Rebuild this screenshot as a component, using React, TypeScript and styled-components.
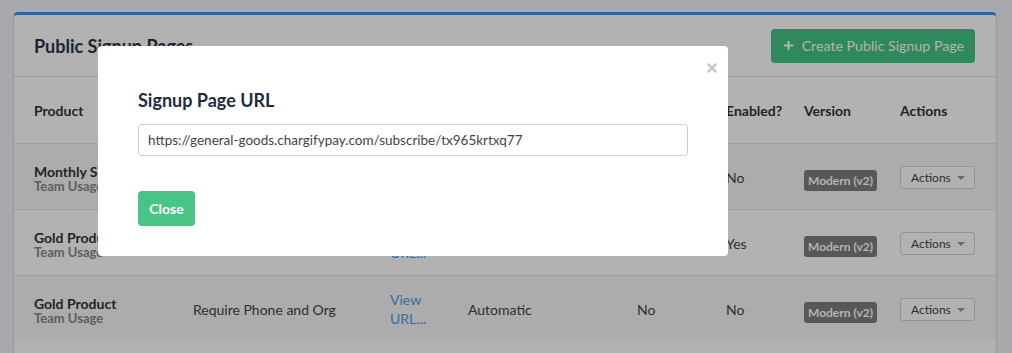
import React from "react";
import styled, { createGlobalStyle } from "styled-components";
import { FaPlus, FaTimes } from "react-icons/fa";

const GlobalStyle = createGlobalStyle`
  html, body { margin: 0; padding: 0; }
  body {
    background: #f2f3f8;
    font-family: Lato, "Open Sans", "Liberation Sans", sans-serif;
    color: #444;
    -webkit-font-smoothing: antialiased;
  }
  * { box-sizing: border-box; }
`;

const Page = styled.div`
  padding: 12px 15px 0 13px;
  height: 353px;
  overflow: hidden;
`;

const Panel = styled.div`
  background: #fff;
  border: 1px solid #dcdcdc;
  border-top: 3px solid #4491e0;
  border-radius: 5px;
`;

const PanelHeader = styled.div`
  display: flex;
  align-items: center;
  justify-content: space-between;
  height: 62px;
  padding: 0 21px 0 20px;
  border-bottom: 1px solid #dedede;
`;

const Title = styled.h2`
  margin: 0;
  font-size: 18px;
  font-weight: 700;
  color: #27364a;
`;

const PrimaryButton = styled.button`
  display: flex;
  align-items: center;
  gap: 8px;
  height: 34px;
  padding: 0 11px 0 12px;
  border: none;
  border-radius: 4px;
  background: #44c584;
  color: #fff;
  font-family: inherit;
  font-size: 14.2px;
  cursor: pointer;
`;

const Table = styled.div`
  display: grid;
  grid-template-columns: 171px 197px 78px 169px 89px 78px 96px 104px;
  padding-bottom: 40px;
`;

const Row = styled.div<{ $striped?: boolean; $head?: boolean }>`
  display: contents;
  & > div {
    background: ${(p) => (p.$striped ? "#f6f6f6" : "#fff")};
    border-top: ${(p) => (p.$head ? "none" : "1px solid #e6e6e6")};
    height: ${(p) => (p.$head ? "66px" : "66px")};
    font-weight: ${(p) => (p.$head ? 700 : 400)};
    color: ${(p) => (p.$head ? "#333" : "#444")};
  }
`;

const Cell = styled.div<{ $first?: boolean }>`
  display: flex;
  flex-direction: column;
  justify-content: center;
  align-items: flex-start;
  padding: 1px 8px 0 ${(p) => (p.$first ? "20px" : "8px")};
  font-size: 14px;
  line-height: 19px;
`;

const ProductCell = styled(Cell)`
  padding-top: 4px;
`;

const ProductName = styled.div`
  font-weight: 700;
  color: #333;
  font-size: 14px;
  line-height: 15px;
`;

const ProductSub = styled.div`
  font-weight: 700;
  color: #888;
  font-size: 13px;
  line-height: 15px;
`;

const Link = styled.a`
  color: #4c9cf0;
  text-decoration: none;
  line-height: 19px;
`;

const Badge = styled.span`
  display: inline-block;
  background: #7e7e7e;
  color: #fff;
  font-size: 12px;
  font-weight: 700;
  line-height: 21px;
  padding: 0 4px;
  border-radius: 3px;
  margin-top: 6px;
`;

const ActionsButton = styled.button`
  display: flex;
  align-items: center;
  gap: 6px;
  height: 23px;
  width: 75px;
  padding: 0 8px 0 10px;
  border: 1px solid #d4d4d4;
  border-radius: 3px;
  background: #fff;
  color: #444;
  font-family: inherit;
  font-size: 12px;
`;

const Caret = styled.span`
  width: 0;
  height: 0;
  border-left: 4px solid transparent;
  border-right: 4px solid transparent;
  border-top: 4px solid #999;
  margin-top: 1px;
`;

const Backdrop = styled.div`
  position: fixed;
  inset: 0;
  background: rgba(0, 0, 0, 0.3);
`;

const Modal = styled.div`
  position: absolute;
  top: 46px;
  left: 98px;
  width: 630px;
  height: 210px;
  background: #fff;
  border-radius: 4px;
  padding: 43px 40px 30px 40px;
  display: flex;
  flex-direction: column;
`;

const CloseX = styled.button`
  position: absolute;
  top: 15px;
  right: 9px;
  border: none;
  background: none;
  padding: 0;
  color: #c6c6c6;
  display: flex;
`;

const ModalTitle = styled.h3`
  margin: 0 0 13px 0;
  font-size: 18px;
  font-weight: 700;
  color: #1f2d3d;
  line-height: 22px;
`;

const UrlInput = styled.input`
  width: 550px;
  height: 32px;
  border: 1px solid #cfcfcf;
  border-radius: 3px;
  padding: 0 9px;
  font-family: inherit;
  font-size: 13.5px;
  color: #444;
  outline: none;
`;

const CloseButton = styled.button`
  margin-top: 35px;
  align-self: flex-start;
  height: 35px;
  width: 57px;
  border: none;
  border-radius: 4px;
  background: #47c486;
  color: #fff;
  font-family: inherit;
  font-size: 14px;
  font-weight: 700;
`;

type Item = {
  name: string;
  sub: string;
  req: string;
  ret: string;
  a: string;
  enabled: string;
};

const rows: Item[] = [
  { name: "Monthly Subscription", sub: "Team Usage", req: "Require Phone", ret: "Automatic", a: "No", enabled: "No" },
  { name: "Gold Product", sub: "Team Usage", req: "None", ret: "Automatic", a: "No", enabled: "Yes" },
  { name: "Gold Product", sub: "Team Usage", req: "Require Phone and Org", ret: "Automatic", a: "No", enabled: "No" },
];

export default function App() {
  return (
    <>
      <GlobalStyle />
      <Page>
        <Panel>
          <PanelHeader>
            <Title>Public Signup Pages</Title>
            <PrimaryButton>
              <FaPlus size={11} />
              Create Public Signup Page
            </PrimaryButton>
          </PanelHeader>
          <Table>
            <Row $head>
              <Cell $first>Product</Cell>
              <Cell>Requirements</Cell>
              <Cell>URL</Cell>
              <Cell>Return Method</Cell>
              <Cell>Default?</Cell>
              <Cell>Enabled?</Cell>
              <Cell>Version</Cell>
              <Cell>Actions</Cell>
            </Row>
            {rows.map((r, i) => (
              <Row key={i} $striped={i % 2 === 0}>
                <ProductCell $first>
                  <ProductName>{r.name}</ProductName>
                  <ProductSub>{r.sub}</ProductSub>
                </ProductCell>
                <Cell>{r.req}</Cell>
                <Cell>
                  <Link href="#">View URL...</Link>
                </Cell>
                <Cell>{r.ret}</Cell>
                <Cell>{r.a}</Cell>
                <Cell>{r.enabled}</Cell>
                <Cell>
                  <Badge>Modern (v2)</Badge>
                </Cell>
                <Cell>
                  <ActionsButton>
                    Actions
                    <Caret />
                  </ActionsButton>
                </Cell>
              </Row>
            ))}
          </Table>
        </Panel>
      </Page>
      <Backdrop>
        <Modal>
          <CloseX aria-label="close">
            <FaTimes size={14} />
          </CloseX>
          <ModalTitle>Signup Page URL</ModalTitle>
          <UrlInput readOnly value="https://general-goods.chargifypay.com/subscribe/tx965krtxq77" />
          <CloseButton>Close</CloseButton>
        </Modal>
      </Backdrop>
    </>
  );
}
